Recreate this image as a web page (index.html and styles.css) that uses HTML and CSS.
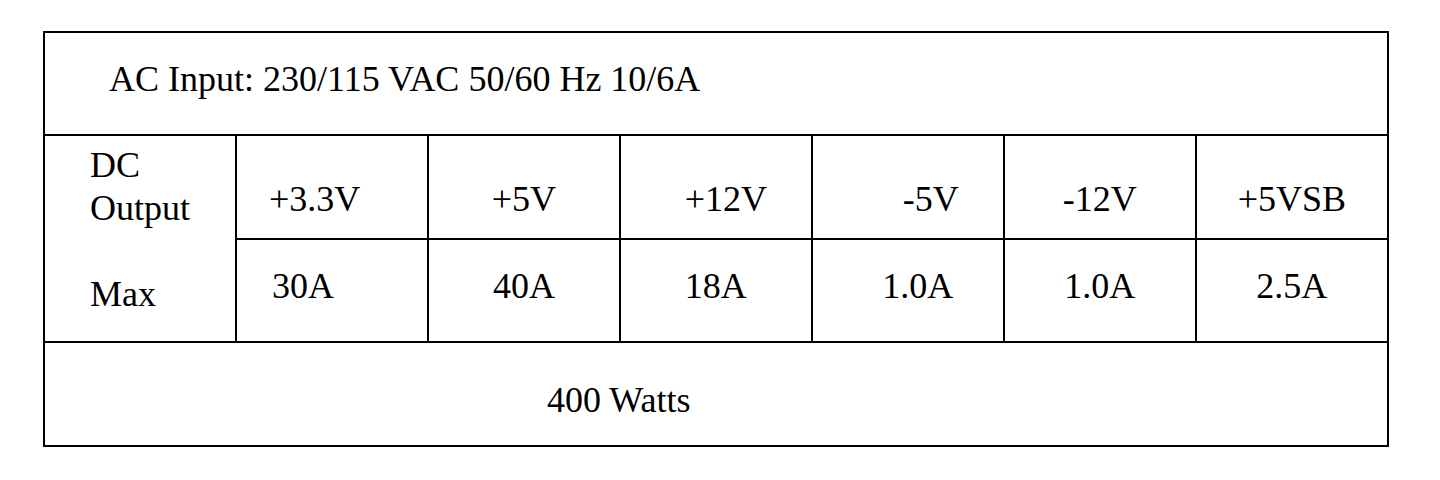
FILE: index.html
```html
<!DOCTYPE html>
<html lang="en">
<head>
    <meta charset="UTF-8">
    <meta name="viewport" content="width=device-width, initial-scale=1.0">
    <title>Power Supply Specs</title>
    <link rel="stylesheet" href="styles.css">
</head>
<body>
    <!-- PSU label table -->
    <table class="spec-table">
        <tr class="row-input">
            <td colspan="7" class="input-cell">AC Input: 230/115 VAC 50/60 Hz 10/6A</td>
        </tr>
        <tr class="row-volts">
            <td rowspan="2" class="label-cell">DC<br>Output<br><br>Max</td>
            <td class="left">+3.3V</td>
            <td>+5V</td>
            <td class="shift-sm">+12V</td>
            <td class="shift-lg">-5V</td>
            <td>-12V</td>
            <td>+5VSB</td>
        </tr>
        <tr class="row-amps">
            <td class="left left-amp">30A</td>
            <td>40A</td>
            <td>18A</td>
            <td class="shift-sm">1.0A</td>
            <td>1.0A</td>
            <td>2.5A</td>
        </tr>
        <tr class="row-total">
            <td colspan="7" class="total-cell">400 Watts</td>
        </tr>
    </table>
</body>
</html>
```

FILE: styles.css
```css
* {
    margin: 0;
    padding: 0;
    box-sizing: border-box;
}

body {
    font-family: "Liberation Serif", "Times New Roman", Tinos, "DejaVu Serif", serif;
    background: #fff;
    color: #000;
    padding: 31px 0 0 43px;
}

.spec-table {
    border-collapse: collapse;
    table-layout: fixed;
    width: 1346px;
    font-family: "Liberation Serif", "Times New Roman", Tinos, "DejaVu Serif", serif;
    font-size: 36px;
    line-height: 44px;
}

.spec-table td {
    border: 2px solid #000;
    width: 192px;
    vertical-align: top;
    text-align: center;
    white-space: nowrap;
}

.row-input td {
    height: 103px;
    padding-top: 24px;
}

.row-volts td {
    height: 104px;
    padding-top: 41px;
}

.row-amps td {
    height: 103px;
    padding-top: 24px;
}

.row-total td {
    height: 104px;
    padding-top: 35px;
}

.input-cell {
    text-align: left !important;
    padding-left: 64px;
}

.row-volts .label-cell {
    text-align: left;
    padding: 8px 0 0 45px;
    line-height: 43px;
}

.left {
    text-align: left !important;
    padding-left: 32px;
}

.left-amp {
    padding-left: 35px;
}

.shift-sm {
    padding-left: 20px;
}

.shift-lg {
    padding-left: 46px;
}

.total-cell {
    text-align: left !important;
    padding-left: 502px;
}
```
